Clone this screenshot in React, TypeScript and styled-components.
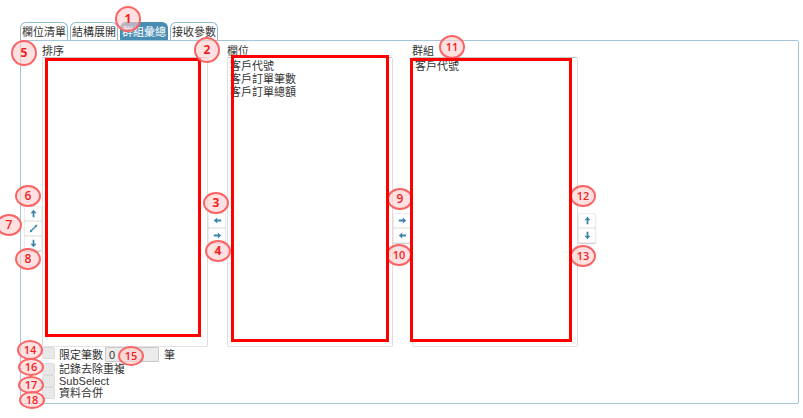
import React from "react";
import styled, { createGlobalStyle, css } from "styled-components";

const GlobalStyle = createGlobalStyle`
  *, *::before, *::after { box-sizing: border-box; }
  body {
    margin: 0;
    background: #fff;
    color: #333;
    font: 11px/13px "Liberation Sans", "Noto Sans CJK TC", sans-serif;
  }
  button, input, select { font: inherit; color: inherit; }
`;

const Page = styled.main`
  position: relative;
  padding: 22px 4px 14px 20px;
`;

const Tabs = styled.div`
  display: flex;
  gap: 2px;
`;

const Tab = styled.button<{ $active?: boolean }>`
  height: 18px;
  padding: 0 1px;
  border: 1px solid ${(p) => (p.$active ? "#4a8db3" : "#8db9d1")};
  border-bottom: 0;
  border-radius: 6px 6px 0 0;
  background: ${(p) => (p.$active ? "#4a8db3" : "#fff")};
  color: ${(p) => (p.$active ? "#fff" : "#333")};
  line-height: 18px;
  white-space: nowrap;
`;

const Panel = styled.section`
  padding-bottom: 4px;
  border: 1px solid #a3c6d9;
  border-radius: 0 2px 2px 2px;
`;

const Columns = styled.div`
  display: flex;
`;

const ListColumn = styled.div`
  display: flex;
  flex-direction: column;
  flex: 0 1 166px;
`;

const ListLabel = styled.label`
  height: 16px;
  padding-top: 4px;
`;

const ListBox = styled.select`
  width: 100%;
  height: 290px;
  padding: 0;
  border: 1px solid #ccc;
  border-color: #c4c4c4 #ddd #e2e2e2;
  border-radius: 2px;
  background: #fff;
  overflow: hidden;
  outline: 0;
  appearance: none;

  option {
    display: flex;
    align-items: center;
    height: 13px;
    min-height: 13px;
    padding: 0 2px;
    line-height: 13px;
  }
`;

const ButtonColumn = styled.div<{ $first?: boolean }>`
  display: flex;
  flex-direction: column;
  justify-content: center;
  flex: 0 0 ${(p) => (p.$first ? "21px" : "19px")};
  padding: 68px 0 0 ${(p) => (p.$first ? "3px" : "0")};
`;

const MoveButton = styled.button`
  display: flex;
  align-items: center;
  justify-content: center;
  width: 18px;
  height: 15px;
  padding: 0;
  border: 1px solid #ededed;
  border-radius: 2px;
  background: #fff;
  box-shadow: 0 1px 1px #ccc;
  color: #3f86ad;
`;

const Options = styled.div`
  margin-left: 21px;
`;

const OptionRow = styled.div<{ $tall?: boolean }>`
  display: flex;
  align-items: flex-start;
  height: ${(p) => (p.$tall ? "16px" : "12px")};
  line-height: ${(p) => (p.$tall ? "16px" : "12px")};
`;

const Check = styled.input`
  appearance: none;
  width: 13px;
  height: 12px;
  margin: 0 4px 0 0;
  border: 1px solid #dcdcdc;
  border-radius: 2px;
  background: #e8e8e8;
`;

const CountInput = styled.input`
  width: 54px;
  height: 15px;
  margin: 0 5px 0 2px;
  padding: 0 3px;
  border: 1px solid #c8c8c8;
  border-radius: 1px;
  background: #ebebeb;
`;

const Frame = styled.div<{ $x: number; $y: number; $w: number; $h: number; $under?: boolean }>`
  position: absolute;
  z-index: ${(p) => (p.$under ? 1 : 3)};
  pointer-events: none;
  border: 3px solid #f00;
  ${(p) => css`
    left: ${p.$x}px;
    top: ${p.$y}px;
    width: ${p.$w}px;
    height: ${p.$h}px;
  `}
`;

const Badge = styled.span<{ $x: number; $y: number; $h: number; $bold?: boolean; $small?: boolean }>`
  position: absolute;
  z-index: 2;
  display: flex;
  align-items: center;
  justify-content: center;
  width: 26px;
  pointer-events: none;
  border: 2px solid #fa6464;
  border-radius: 50%;
  background: rgba(255, 205, 205, 0.6);
  color: #f21f1f;
  font-family: "Open Sans", sans-serif;
  font-size: ${(p) => (p.$small ? "11px" : "12px")};
  font-weight: ${(p) => (p.$bold ? 700 : 600)};
  line-height: 12px;
  ${(p) => css`
    left: ${p.$x - 13}px;
    top: ${p.$y - p.$h / 2}px;
    height: ${p.$h}px;
  `}
`;

type Glyph = "up" | "down" | "left" | "right" | "swap";

const turns: Record<Glyph, number> = { up: 0, right: 90, down: 180, left: 270, swap: 45 };

const Arrow = ({ kind }: { kind: Glyph }) => (
  <svg width="9" height="9" viewBox="0 0 9 9" aria-hidden="true">
    <g transform={`rotate(${turns[kind]} 4.5 4.5)`} fill="currentColor">
      {kind === "swap" ? (
        <path d="M4.5-1 6 1.6H5.2V7.4H6L4.5 10 3 7.4H3.8V1.6H3Z" />
      ) : (
        <path d="M4.5.8 7.6 4.2H5.4V8.2H3.6V4.2H1.4Z" />
      )}
    </g>
  </svg>
);

const Moves = ({ items, first }: { items: [Glyph, string][]; first?: boolean }) => (
  <ButtonColumn $first={first}>
    {items.map(([kind, label]) => (
      <MoveButton key={kind} type="button" aria-label={label}>
        <Arrow kind={kind} />
      </MoveButton>
    ))}
  </ButtonColumn>
);

const List = ({ id, label, items }: { id: string; label: string; items: string[] }) => (
  <ListColumn>
    <ListLabel htmlFor={id}>{label}</ListLabel>
    <ListBox id={id} multiple>
      {items.map((item) => (
        <option key={item}>{item}</option>
      ))}
    </ListBox>
  </ListColumn>
);

const tabs = ["欄位清單", "結構展開", "群組彙總", "接收參數"];

const badges: { n: number; x: number; y: number; h: number; bold?: boolean }[] = [
  { n: 1, x: 128, y: 19, h: 26, bold: true },
  { n: 2, x: 207, y: 50, h: 26, bold: true },
  { n: 3, x: 216, y: 203, h: 22, bold: true },
  { n: 4, x: 218, y: 251, h: 22, bold: true },
  { n: 5, x: 24, y: 53, h: 26, bold: true },
  { n: 6, x: 28, y: 196, h: 22 },
  { n: 7, x: 9, y: 225, h: 22 },
  { n: 8, x: 28, y: 259, h: 22 },
  { n: 9, x: 400, y: 199, h: 22 },
  { n: 10, x: 399, y: 255, h: 22 },
  { n: 11, x: 452, y: 47, h: 24 },
  { n: 12, x: 583, y: 196, h: 22 },
  { n: 13, x: 583, y: 256, h: 22 },
  { n: 14, x: 30, y: 350, h: 20 },
  { n: 15, x: 131, y: 356, h: 20 },
  { n: 16, x: 31, y: 367, h: 18 },
  { n: 17, x: 31, y: 385, h: 18 },
  { n: 18, x: 32, y: 400, h: 18 },
];

export default function App() {
  return (
    <>
      <GlobalStyle />
      <Page>
        <Tabs role="tablist">
          {tabs.map((tab, i) => (
            <Tab key={tab} type="button" role="tab" aria-selected={i === 2} $active={i === 2}>
              {tab}
            </Tab>
          ))}
        </Tabs>
        <Panel>
          <Columns>
            <Moves first items={[["up", "上移"], ["swap", "切換"], ["down", "下移"]]} />
            <List id="sort" label="排序" items={[]} />
            <Moves items={[["left", "加入排序"], ["right", "移除排序"]]} />
            <List id="fields" label="欄位" items={["客戶代號", "客戶訂單筆數", "客戶訂單總額"]} />
            <Moves items={[["right", "加入群組"], ["left", "移除群組"]]} />
            <List id="groups" label="群組" items={["客戶代號"]} />
            <Moves items={[["up", "上移"], ["down", "下移"]]} />
          </Columns>
          <Options>
            <OptionRow $tall>
              <Check id="limit" type="checkbox" disabled />
              <label htmlFor="limit">限定筆數</label>
              <CountInput aria-label="限定筆數" defaultValue="0" disabled />
              <span>筆</span>
            </OptionRow>
            <OptionRow>
              <Check id="distinct" type="checkbox" disabled />
              <label htmlFor="distinct">記錄去除重複</label>
            </OptionRow>
            <OptionRow>
              <Check id="subselect" type="checkbox" disabled />
              <label htmlFor="subselect">SubSelect</label>
            </OptionRow>
            <OptionRow>
              <Check id="merge" type="checkbox" disabled />
              <label htmlFor="merge">資料合併</label>
            </OptionRow>
          </Options>
        </Panel>
        <Frame $x={45} $y={58} $w={156} $h={279} $under />
        <Frame $x={231} $y={55} $w={158} $h={287} />
        <Frame $x={410} $y={58} $w={162} $h={284} />
        {badges.map((b) => (
          <Badge key={b.n} $x={b.x} $y={b.y} $h={b.h} $bold={b.bold} $small={b.n > 9}>
            {b.n}
          </Badge>
        ))}
      </Page>
    </>
  );
}
